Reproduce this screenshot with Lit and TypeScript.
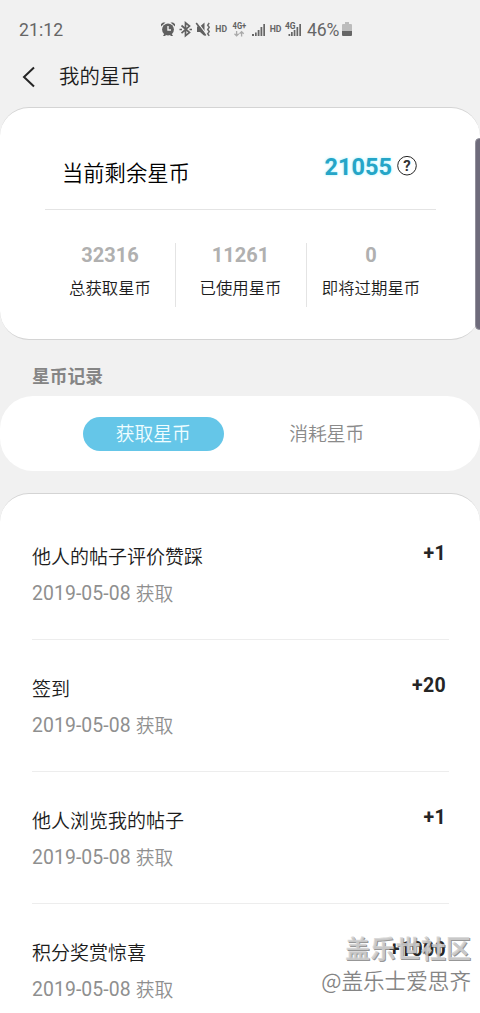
import { LitElement, html, css } from "lit";
import { customElement, property } from "lit/decorators.js";

interface CoinRecord {
  title: string;
  date: string;
  action: string;
  amount: string;
}

const RECORDS: CoinRecord[] = [
  { title: "他人的帖子评价赞踩", date: "2019-05-08", action: "获取", amount: "+1" },
  { title: "签到", date: "2019-05-08", action: "获取", amount: "+20" },
  { title: "他人浏览我的帖子", date: "2019-05-08", action: "获取", amount: "+1" },
  { title: "积分奖赏惊喜", date: "2019-05-08", action: "获取", amount: "+1000" },
];

const STATS = [
  { value: "32316", label: "总获取星币" },
  { value: "11261", label: "已使用星币" },
  { value: "0", label: "即将过期星币" },
];

@customElement("status-bar")
class StatusBar extends LitElement {
  static styles = css`
    :host { display: flex; height: 60px; padding: 0 19px; color: #666; align-items: center; box-sizing: border-box; }
    .time { width: 141px; font-size: 17.6px; letter-spacing: 0.1px; }
    .icons { display: block; width: 147px; height: 24px; }
    .battery { font-size: 17.6px; letter-spacing: -0.1px; }
    .level { width: 10px; height: 14px; margin: -2px 0 0 3px; }
    .small { font: 700 9px Roboto, sans-serif; fill: #666; }
    .network { font: 700 9px Roboto, sans-serif; fill: #606060; }
  `;
  render() {
    return html`
      <span class="time">21:12</span>
      <svg class="icons" viewBox="160 18 147 24">
        <g fill="#606060">
          <circle cx="168" cy="29.500" r="5.900" />
          <path d="M161 26.500v-2.500l2-1.500h2.500zM175 26.500v-2.500l-2-1.500h-2.500zM163 36l1.500-2.500 1.800 1.300-1.300 1.200zM173 36l-1.500-2.500-1.800 1.300 1.300 1.200z" />
        </g>
        <path d="M168 26v4h3" fill="none" stroke="#f1f1f1" stroke-width="1.400" />
        <path d="M181.500 25.500l8 7-4 3.300v-13l4 3.300-8 7M179.500 29.500h2.500M189.500 29.500h2.500" fill="none" stroke="#606060" stroke-width="1.700" />
        <path d="M197 26.500h3l4.500-4v13.500l-4.500-4h-3z" fill="#606060" />
        <path d="M197.700 22.700l9 12" stroke="#f1f1f1" stroke-width="1.200" />
        <path d="M196.200 23l9.500 12.500" stroke="#606060" stroke-width="1.600" />
        <path d="M209.200 23l-1.500 2.200 1.500 2.100-1.500 2.200 1.500 2.100-1.500 2.200 1.500 2.100" fill="none" stroke="#6a6a6a" stroke-width="1.500" />
        <text class="small" x="215.300" y="32.300" textLength="11.700" lengthAdjust="spacingAndGlyphs">HD</text>
        <text class="network" x="232.600" y="29.300" textLength="13.600" lengthAdjust="spacingAndGlyphs">4G+</text>
        <path d="M236.600 31v5M234.500 33.700l2.100 2.200 2.100-2.200M241.600 36.500v-5M239.500 33.800l2.100-2.200 2.100 2.200" fill="none" stroke="#aaa" stroke-width="1.300" />
        <path d="M252 34h2v2h-2zM255 32.500h1.700v3.500h-1.700zM257.700 30h1.800v6h-1.800zM260.500 27h1.800v9h-1.800zM263.300 24h1.700v12h-1.700z" fill="#666" />
        <text class="small" x="269.700" y="32.300" textLength="11.800" lengthAdjust="spacingAndGlyphs">HD</text>
        <text class="network" x="285" y="29.300" textLength="10.600" lengthAdjust="spacingAndGlyphs">4G</text>
        <path d="M288.500 34h1.700v2h-1.700zM291 32h1.700v4h-1.700zM293.700 30h1.700v6h-1.700zM296.500 27h1.700v9h-1.700zM299.300 24h1.700v12h-1.700z" fill="#666" />
      </svg>
      <span class="battery">46%</span>
      <svg class="level" viewBox="0 0 10 14">
        <path d="M3 0h4v2h2a1 1 0 0 1 1 1v6h-10v-6a1 1 0 0 1 1-1h2z" fill="#bcbcbc" />
        <path d="M0 9h10v4a1 1 0 0 1-1 1h-8a1 1 0 0 1-1-1z" fill="#666" />
      </svg>
    `;
  }
}

@customElement("record-row")
class RecordRow extends LitElement {
  @property({ attribute: false }) record!: CoinRecord;
  static styles = css`
    :host { display: flex; justify-content: space-between; height: 132px; box-sizing: border-box; border-bottom: 1px solid #ededed; padding: 34px 3px 0 0; }
    .title { font-size: 19px; line-height: 28px; color: #1c1c1c; font-weight: 350; font-family: "Noto Sans CJK SC DemiLight", "Noto Sans CJK SC", sans-serif; }
    .meta { display: flex; gap: 5px; font-size: 18.8px; line-height: 30px; margin-top: 9px; color: #8f8f8f; }
    .date { font-size: 19.4px; letter-spacing: 0.08px; }
    .action { line-height: 28px; font-weight: 350; font-family: "Noto Sans CJK SC DemiLight", "Noto Sans CJK SC", sans-serif; }
    .amount { font-size: 19.5px; font-weight: 700; line-height: 24px; letter-spacing: 0.3px; color: #252525; }
  `;
  render() {
    return html`
      <div>
        <div class="title">${this.record.title}</div>
        <div class="meta"><span class="date">${this.record.date}</span><span class="action">${this.record.action}</span></div>
      </div>
      <div class="amount">${this.record.amount}</div>
    `;
  }
}

@customElement("app-root")
class AppRoot extends LitElement {
  static styles = css`
    :host { display: block; position: relative; width: 480px; height: 1013px; overflow: hidden; background: #f1f1f1; font-family: Roboto, "Noto Sans CJK SC", sans-serif; }
    .heading, .balance-label, .stat-label, .tab, .mark-user { font-family: "Noto Sans CJK SC DemiLight", "Noto Sans CJK SC", sans-serif; font-weight: 350; }
    .header { display: flex; align-items: center; height: 34px; padding-left: 21px; }
    .back { width: 16px; height: 24px; }
    .heading { margin: 0 0 3px 22px; font-size: 20.4px; line-height: 31px; color: #1c1c1c; }
    .card { background: #fff; border-radius: 29px; box-sizing: border-box; }
    .summary { margin-top: 13px; height: 233px; border: 1px solid #d4d4d4; border-width: 1px 0; padding: 0 44px 0 45px; }
    .balance { display: flex; justify-content: space-between; height: 102px; box-sizing: border-box; border-bottom: 1px solid #e4e4e4; padding: 46px 19px 0 17px; }
    .balance-label { font-size: 21.3px; line-height: 36px; color: #000; }
    .total { display: flex; align-items: flex-start; gap: 5px; }
    .total-value { font-size: 23.5px; font-weight: 700; line-height: 27px; color: #25a5c7; text-shadow: 0 0 3px rgba(100, 235, 255, 0.6); }
    .help { width: 20px; height: 20px; margin-top: 2px; }
    .help-mark { font: 700 15px Roboto, sans-serif; fill: #333; }
    .stats { display: grid; grid-template-columns: 130px 131px 130px; margin-top: 33px; }
    .stat { height: 64px; border-left: 1px solid #e4e4e4; text-align: center; box-sizing: border-box; padding-right: 1px; }
    .stat:first-child { border-left-color: transparent; }
    .stat-value { font-size: 20px; line-height: 25px; font-weight: 700; color: #b0b0b0; }
    .stat-label { font-size: 16.4px; line-height: 24px; margin-top: 7px; color: #1c1c1c; white-space: nowrap; }
    .section { height: 56px; padding: 22px 32px 0; box-sizing: border-box; font-size: 17.8px; line-height: 30px; font-weight: 600; color: #858585; }
    .tabs { display: flex; height: 75px; padding: 21px 83px; gap: 33px; border-radius: 33px; }
    .tab { width: 141px; height: 34px; box-sizing: border-box; border-radius: 17px; font-size: 18.8px; line-height: 31px; text-align: center; color: #8a8a8a; }
    .tab.active { background: #65c6e8; color: #effdff; }
    .records { margin-top: 22px; height: 600px; border-top: 1px solid #d4d4d4; padding: 14px 31px 0 32px; }
    .edge { position: absolute; right: -4px; top: 138px; width: 9px; height: 192px; box-sizing: border-box; border-radius: 5px; background: #6e6b7b; border: 1px solid #918f9a; }
    .watermark { position: absolute; right: 9px; top: 928px; text-align: right; white-space: nowrap; font-family: "Noto Sans CJK SC", sans-serif; }
    .mark-title { font-size: 25.2px; line-height: 38px; font-weight: 600; color: rgba(210, 210, 210, 0.85); text-shadow: 1px 1px 0 rgba(90, 90, 90, 0.65); }
    .mark-user { font-size: 21.6px; line-height: 30px; color: #858585; margin-top: -1px; }
  `;
  render() {
    return html`
      <status-bar></status-bar>
      <div class="header">
        <svg class="back" viewBox="0 0 16 24"><path d="M13 2.500L3 12l10 9.500" fill="none" stroke="#252525" stroke-width="2" /></svg>
        <div class="heading">我的星币</div>
      </div>
      <div class="card summary">
        <div class="balance">
          <div class="balance-label">当前剩余星币</div>
          <div class="total">
            <span class="total-value">21055</span>
            <svg class="help" viewBox="0 0 20 20">
              <circle cx="10" cy="9.700" r="9.300" fill="none" stroke="#252525" />
              <text class="help-mark" x="10" y="15" text-anchor="middle">?</text>
            </svg>
          </div>
        </div>
        <div class="stats">
          ${STATS.map((s) => html`<div class="stat"><div class="stat-value">${s.value}</div><div class="stat-label">${s.label}</div></div>`)}
        </div>
      </div>
      <div class="section">星币记录</div>
      <div class="card tabs">
        <div class="tab active">获取星币</div>
        <div class="tab">消耗星币</div>
      </div>
      <div class="card records">
        ${RECORDS.map((r) => html`<record-row .record=${r}></record-row>`)}
      </div>
      <div class="edge"></div>
      <div class="watermark">
        <div class="mark-title">盖乐世社区</div>
        <div class="mark-user">@盖乐士爱思齐</div>
      </div>
    `;
  }
}
